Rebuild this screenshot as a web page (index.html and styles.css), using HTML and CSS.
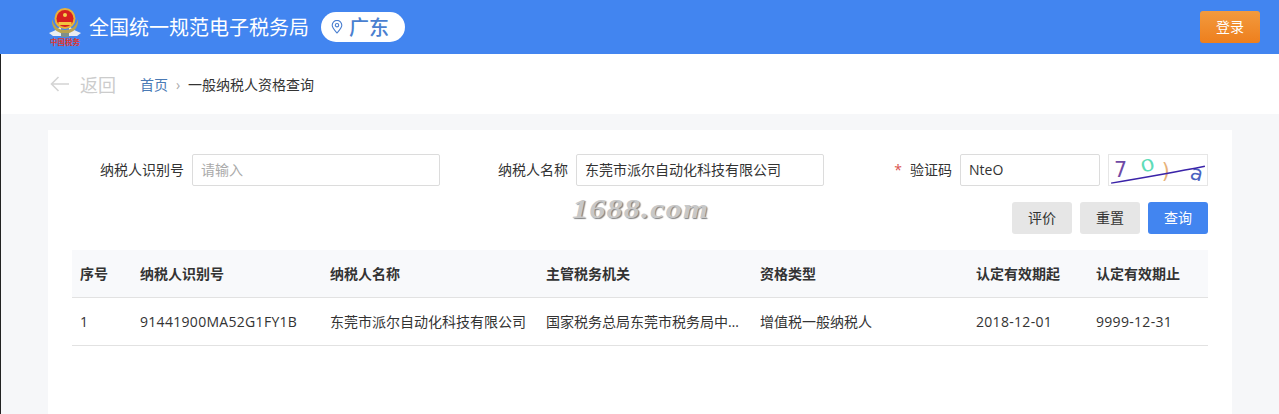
FILE: index.html
```html
<!DOCTYPE html>
<html lang="zh-CN">
<head>
    <meta charset="UTF-8">
    <meta name="viewport" content="width=device-width, initial-scale=1.0">
    <title>一般纳税人资格查询 - 全国统一规范电子税务局</title>
    <link rel="stylesheet" href="styles.css">
</head>
<body>
    <header class="top-bar">
        <div class="brand">
            <svg class="brand-logo" width="34" height="40" viewBox="0 0 34 40">
                <path d="M1 26 C6 24 10 22 13 19 L13 29 L5 29 Z" fill="#e9edf2"/>
                <path d="M33 26 C28 24 24 22 21 19 L21 29 L29 29 Z" fill="#e9edf2"/>
                <path d="M4 12 C3 20 8 26 17 27 C26 26 31 20 30 12 C28 19 24 23 17 23 C10 23 6 19 4 12 Z" fill="#b9a24f"/>
                <circle cx="17" cy="11.500" r="10.500" fill="#e9b13a"/>
                <circle cx="17" cy="11.500" r="8.500" fill="#d6201f"/>
                <circle cx="17" cy="8" r="2" fill="#f5cf4d"/>
                <path d="M10.500 15 H23.500 V18 H10.500 Z" fill="#f2c53f"/>
                <path d="M13 26 H21 V30 H13 Z" fill="#7f8f8c"/>
                <text class="brand-logo-text" x="17" y="38" text-anchor="middle">中国税务</text>
            </svg>
            <span class="brand-name">全国统一规范电子税务局</span>
            <span class="region-pill">
                <svg width="12" height="14" viewBox="0 0 12 14" fill="none" stroke="#4a7fd0" stroke-width="1.100">
                    <path d="M6 13 C3 9.500 1.200 7.500 1.200 5.200 A4.800 4.800 0 0 1 10.800 5.200 C10.800 7.500 9 9.500 6 13 Z"/>
                    <circle cx="6" cy="5.200" r="1.700"/>
                </svg>
                <span class="region-name">广东</span>
            </span>
        </div>
        <button type="button" class="login-btn">登录</button>
    </header>

    <nav class="sub-bar">
        <a class="back-link">
            <svg width="20" height="16" viewBox="0 0 20 16" fill="none" stroke="#d4d4d4" stroke-width="1.600">
                <path d="M19 8 H1.500 M8.500 1 L1.500 8 L8.500 15"/>
            </svg>
            <span>返回</span>
        </a>
        <a class="crumb-home">首页</a>
        <span class="crumb-sep">›</span>
        <span class="crumb-current">一般纳税人资格查询</span>
    </nav>

    <main class="page-body">
        <section class="card">
            <form class="search-form">
                <div class="form-group">
                    <label class="form-label">纳税人识别号</label>
                    <input type="text" class="form-input" placeholder="请输入">
                </div>
                <div class="form-group">
                    <label class="form-label">纳税人名称</label>
                    <input type="text" class="form-input" value="东莞市派尔自动化科技有限公司">
                </div>
                <div class="form-group">
                    <label class="form-label"><span class="required">*</span>验证码</label>
                    <input type="text" class="form-input" value="NteO">
                    <svg class="captcha" width="100" height="32" viewBox="0 0 100 32">
                        <text class="captcha-char" x="3" y="23" fill="#6f4aa6">7</text>
                        <text class="captcha-char" fill="#5fdcb8" transform="translate(33 19) rotate(-14) scale(1.100 0.800)">0</text>
                        <text class="captcha-char" x="54" y="25" fill="#e8b27a">)</text>
                        <text class="captcha-char" fill="#4a62c0" transform="translate(83 25) rotate(14)">a</text>
                        <path d="M0 30 C30 25 70 18 100 12" fill="none" stroke="#3a23a8" stroke-width="1.600"/>
                    </svg>
                </div>
            </form>

            <div class="form-actions">
                <button type="button" class="btn">评价</button>
                <button type="button" class="btn">重置</button>
                <button type="button" class="btn btn-primary">查询</button>
            </div>

            <table class="result-table">
                <colgroup>
                    <col class="col-index">
                    <col class="col-code">
                    <col class="col-name">
                    <col class="col-office">
                    <col class="col-type">
                    <col class="col-date">
                    <col class="col-date">
                </colgroup>
                <thead>
                    <tr>
                        <th>序号</th>
                        <th>纳税人识别号</th>
                        <th>纳税人名称</th>
                        <th>主管税务机关</th>
                        <th>资格类型</th>
                        <th>认定有效期起</th>
                        <th>认定有效期止</th>
                    </tr>
                </thead>
                <tbody>
                    <tr>
                        <td>1</td>
                        <td class="cell-num">91441900MA52G1FY1B</td>
                        <td>东莞市派尔自动化科技有限公司</td>
                        <td>国家税务总局东莞市税务局中…</td>
                        <td>增值税一般纳税人</td>
                        <td class="cell-num">2018-12-01</td>
                        <td class="cell-num">9999-12-31</td>
                    </tr>
                </tbody>
            </table>

            <div class="watermark">1688.com</div>
        </section>
    </main>
</body>
</html>
```

FILE: styles.css
```css
* {
    box-sizing: border-box;
    margin: 0;
    padding: 0;
    font-family: 'Open Sans', 'Noto Sans CJK SC', sans-serif;
}

html, body {
    height: 100%;
}

body {
    display: flex;
    flex-direction: column;
    overflow: hidden;
    background-color: #f6f7f9;
    color: #333;
    font-size: 14px;
}

/* top bar */
.top-bar {
    display: flex;
    justify-content: space-between;
    align-items: center;
    height: 54px;
    padding: 0 19px 0 48px;
    background-color: #4285f0;
}

.brand {
    display: flex;
    align-items: center;
}

.brand-logo-text {
    font-size: 7.500px;
    font-weight: 700;
    fill: #e0352b;
}

.brand-name {
    margin-left: 7px;
    margin-right: 12px;
    padding-bottom: 2px;
    color: #fff;
    font-size: 20px;
}

.region-pill {
    display: flex;
    align-items: center;
    gap: 6px;
    width: 84px;
    height: 30px;
    padding-left: 10px;
    border-radius: 15px;
    background-color: #fff;
}

.region-name {
    padding-bottom: 2px;
    color: #4a7fd0;
    font-size: 20px;
    font-weight: 500;
}

.login-btn {
    width: 60px;
    height: 32px;
    padding-bottom: 2px;
    border: none;
    border-radius: 3px;
    background: linear-gradient(#f29a3e, #ee7f1d);
    color: #fff;
    font-size: 14px;
}

/* breadcrumb bar */
.sub-bar {
    display: flex;
    align-items: center;
    height: 60px;
    padding-left: 49px;
    border-left: 1px solid #222;
    background-color: #fff;
}

.back-link {
    display: flex;
    align-items: center;
    gap: 10px;
    width: 90px;
    color: #ccc;
    font-size: 18px;
}

.crumb-home {
    color: #4a7ab5;
}

.crumb-sep {
    width: 20px;
    text-align: center;
    color: #aaa;
}

.crumb-current {
    color: #333;
}

/* content */
.page-body {
    flex: 1;
    padding: 16px 47px 0 47px;
    border-left: 1px solid #222;
}

.card {
    position: relative;
    height: 100%;
    padding: 24px;
    background-color: #fff;
}

.search-form {
    display: grid;
    grid-template-columns: repeat(3, 368px);
    gap: 16px;
}

.form-group {
    display: flex;
    align-items: center;
    gap: 8px;
}

.form-label {
    flex: 0 0 112px;
    padding-bottom: 2px;
    text-align: right;
    color: #333;
}

.required {
    margin-right: 8px;
    color: #d9534f;
}

.form-input {
    flex: 1;
    min-width: 0;
    height: 32px;
    padding: 0 8px 2px;
    border: 1px solid #dcdcdc;
    border-radius: 2px;
    color: #333;
    font-size: 14px;
}

.form-input::placeholder {
    color: #aaa;
}

.captcha {
    flex: 0 0 100px;
    border: 1px solid #e6e6e6;
    background-color: #fff;
}

.captcha-char {
    font-family: 'DejaVu Sans', sans-serif;
    font-size: 22px;
}

.form-actions {
    display: flex;
    justify-content: flex-end;
    gap: 8px;
    margin-top: 16px;
}

.btn {
    width: 60px;
    height: 32px;
    padding-bottom: 2px;
    border: none;
    border-radius: 3px;
    background-color: #e6e6e6;
    color: #333;
    font-size: 14px;
}

.btn-primary {
    background-color: #4285f0;
    color: #fff;
}

/* table */
.result-table {
    width: 100%;
    margin-top: 16px;
    border-collapse: collapse;
    table-layout: fixed;
}

.col-index { width: 60px; }
.col-code { width: 190px; }
.col-name { width: 216px; }
.col-office { width: 214px; }
.col-type { width: 216px; }
.col-date { width: 120px; }

.result-table th,
.result-table td {
    height: 48px;
    padding: 0 8px;
    border-bottom: 1px solid #e2e2e2;
    text-align: left;
    white-space: nowrap;
    font-size: 14px;
}

.result-table th {
    height: 47px;
    background-color: #f8f9fb;
    font-weight: 700;
}

.result-table .cell-num {
    letter-spacing: 0.300px;
}

.watermark {
    position: absolute;
    left: 524px;
    top: 63px;
    color: #c8c8c8;
    font-family: 'Liberation Serif', serif;
    font-size: 28px;
    font-style: italic;
    font-weight: 700;
    letter-spacing: 1px;
    text-shadow: 1px 1px 1px #808080;
    transform: scaleX(1.150);
    transform-origin: left center;
}
```
